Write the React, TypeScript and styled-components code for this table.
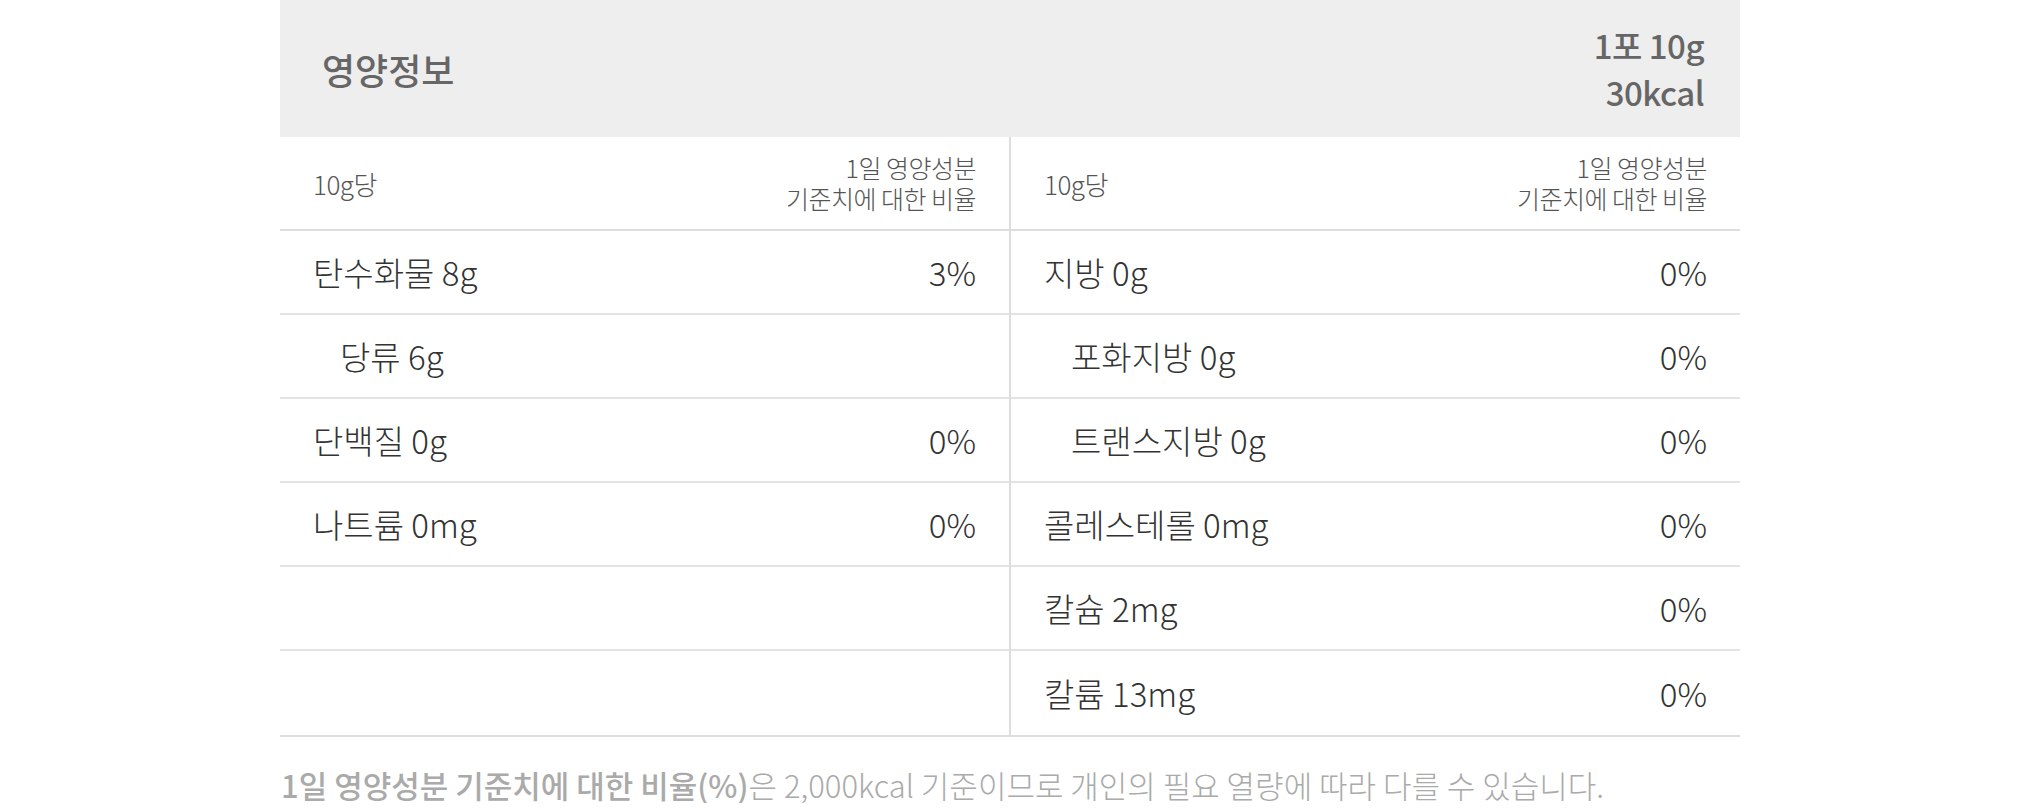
import React from "react";
import styled, { createGlobalStyle } from "styled-components";

const GlobalStyle = createGlobalStyle`
  html, body {
    margin: 0;
    padding: 0;
    background: #ffffff;
  }
  body {
    font-family: "Noto Sans CJK KR", "Noto Sans", sans-serif;
  }
`;

type Item = { name: string; value?: string; sub?: boolean };

const leftItems: Item[] = [
  { name: "탄수화물 8g", value: "3%" },
  { name: "당류 6g", sub: true },
  { name: "단백질 0g", value: "0%" },
  { name: "나트륨 0mg", value: "0%" },
  { name: "" },
  { name: "" },
];

const rightItems: Item[] = [
  { name: "지방 0g", value: "0%" },
  { name: "포화지방 0g", value: "0%", sub: true },
  { name: "트랜스지방 0g", value: "0%", sub: true },
  { name: "콜레스테롤 0mg", value: "0%" },
  { name: "칼슘 2mg", value: "0%" },
  { name: "칼륨 13mg", value: "0%" },
];

const Column = ({ items, divider }: { items: Item[]; divider?: boolean }) => (
  <Col $divider={divider}>
    <SubHead>
      <Per>10g당</Per>
      <Ratio>
        1일 영양성분
        <br />
        기준치에 대한 비율
      </Ratio>
    </SubHead>
    {items.map((it, i) => (
      <Row key={i}>
        <Name $sub={it.sub}>{it.name}</Name>
        {it.value && <Value>{it.value}</Value>}
      </Row>
    ))}
  </Col>
);

const App = () => {
  return (
    <Page>
      <GlobalStyle />
      <Table>
        <Header>
          <Title>영양정보</Title>
          <Serving>
            1포 10g
            <br />
            30kcal
          </Serving>
        </Header>
        <Body>
          <Column items={leftItems} divider />
          <Column items={rightItems} />
        </Body>
        <Note>
          <strong>1일 영양성분 기준치에 대한 비율(%)</strong>은 2,000kcal 기준이므로 개인의 필요 열량에 따라 다를 수 있습니다.
        </Note>
      </Table>
    </Page>
  );
};

export default App;

const Page = styled.div`
  width: 100%;
  display: flex;
  justify-content: center;
`;

const Table = styled.div`
  width: 1460px;
  display: flex;
  flex-direction: column;
`;

const Header = styled.div`
  height: 137px;
  box-sizing: border-box;
  background: #eeeeee;
  padding: 0 36px 0 42px;
  display: flex;
  justify-content: space-between;
  align-items: center;
  color: #666666;
  font-weight: 500;
`;

const Title = styled.div`
  font-size: 36px;
`;

const Serving = styled.div`
  font-size: 33px;
  line-height: 47px;
  text-align: right;
  letter-spacing: -0.5px;
`;

const Body = styled.div`
  display: flex;
  border-bottom: 2px solid #dddddd;
`;

const Col = styled.div<{ $divider?: boolean }>`
  flex: 1;
  border-right: ${(p) => (p.$divider ? "2px solid #dddddd" : "none")};
  display: flex;
  flex-direction: column;
`;

const SubHead = styled.div`
  height: 94px;
  box-sizing: border-box;
  border-bottom: 2px solid #dddddd;
  padding: 0 33px;
  display: flex;
  justify-content: space-between;
  align-items: center;
  color: #555555;
  font-weight: 300;
`;

const Per = styled.div`
  font-size: 26px;
  letter-spacing: -0.5px;
`;

const Ratio = styled.div`
  font-size: 25px;
  line-height: 31px;
  text-align: right;
  letter-spacing: -0.5px;
`;

const Row = styled.div`
  height: 84px;
  box-sizing: border-box;
  border-bottom: 2px solid #e3e3e3;
  padding: 0 33px;
  display: flex;
  justify-content: space-between;
  align-items: center;
  color: #333333;
  font-size: 33px;
  font-weight: 300;
  &:last-child {
    border-bottom: none;
  }
`;

const Name = styled.div<{ $sub?: boolean }>`
  padding-left: ${(p) => (p.$sub ? "27px" : "0")};
`;

const Value = styled.div``;

const Note = styled.p`
  margin: 0;
  padding: 30px 0 0 1px;
  font-size: 31px;
  line-height: 36px;
  color: #aaaaaa;
  font-weight: 300;
  strong {
    font-weight: 500;
  }
`;
